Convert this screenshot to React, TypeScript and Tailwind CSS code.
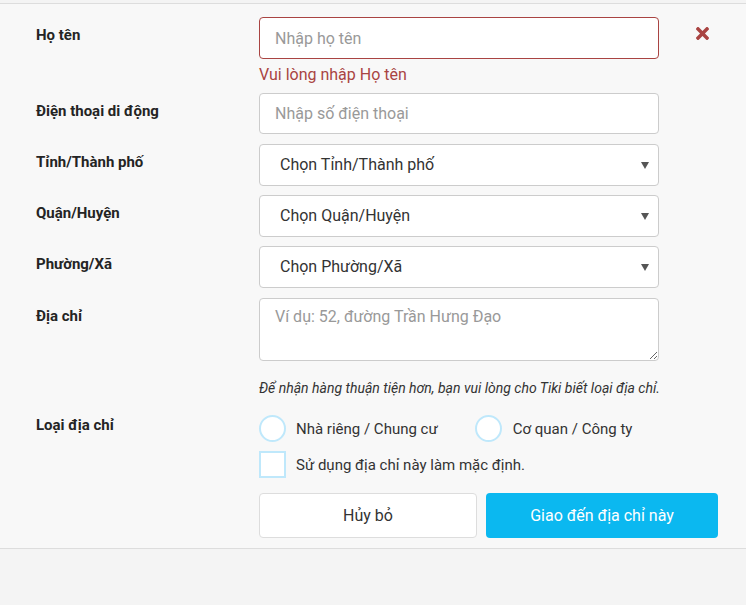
import React from "react";

const font = { fontFamily: "Roboto, 'Noto Sans', sans-serif" };

function Label({ children }: { children: React.ReactNode }) {
  return <div className="w-[223px] shrink-0 pt-[8px] text-[15px] font-bold leading-5 text-[#242424]">{children}</div>;
}

function Select({ value }: { value: string }) {
  return (
    <div className="relative h-[42px] w-[400px] rounded-[4px] border border-[#ccc] bg-white">
      <div className="pl-[20px] text-[16px] leading-[40px] text-[#333]">{value}</div>
      <svg className="absolute right-[9px] top-[17px]" width="8" height="7" viewBox="0 0 8 7">
        <path d="M0 0h8L4 7z" fill="#555" />
      </svg>
    </div>
  );
}

function TimesIcon() {
  return (
    <svg width="13" height="13" viewBox="0 0 352 352" className="mt-[10px]">
      <path
        fill="#a94442"
        d="M242.7 176 342.8 75.9c12.3-12.3 12.3-32.2 0-44.5L320.6 9.2c-12.3-12.3-32.2-12.3-44.5 0L176 109.3 75.9 9.2C63.6-3.1 43.7-3.1 31.4 9.2L9.2 31.4c-12.3 12.3-12.3 32.2 0 44.5L109.3 176 9.2 276.1c-12.3 12.3-12.3 32.2 0 44.5l22.2 22.2c12.3 12.3 32.2 12.3 44.5 0L176 242.7l100.1 100.1c12.3 12.3 32.2 12.3 44.5 0l22.2-22.2c12.3-12.3 12.3-32.2 0-44.5z"
      />
    </svg>
  );
}

export default function App() {
  return (
    <div className="min-h-[605px] bg-[#f4f4f4] pt-[3px]" style={font}>
      <div className="border-y border-[#ddd] bg-[#f8f8f8] pb-[10px] pl-[36px] pt-[13px]">
        <div className="flex">
          <Label>Họ tên</Label>
          <div>
            <input
              className="h-[42px] w-[400px] rounded-[4px] border border-[#a94442] bg-white px-[15px] text-[16px] text-[#333] outline-none placeholder:text-[#999]"
              placeholder="Nhập họ tên"
            />
            <p className="mb-[8px] mt-[6px] text-[16px] leading-5 text-[#a94442]">Vui lòng nhập Họ tên</p>
          </div>
          <div className="pl-[37px]">
            <TimesIcon />
          </div>
        </div>

        <div className="mb-[10px] flex">
          <Label>Điện thoại di động</Label>
          <input
            className="h-[41px] w-[400px] rounded-[4px] border border-[#ccc] bg-white px-[15px] text-[16px] text-[#333] outline-none placeholder:text-[#999]"
            placeholder="Nhập số điện thoại"
          />
        </div>

        <div className="mb-[9px] flex">
          <Label>Tỉnh/Thành phố</Label>
          <Select value="Chọn Tỉnh/Thành phố" />
        </div>
        <div className="mb-[9px] flex">
          <Label>Quận/Huyện</Label>
          <Select value="Chọn Quận/Huyện" />
        </div>
        <div className="mb-[10px] flex">
          <Label>Phường/Xã</Label>
          <Select value="Chọn Phường/Xã" />
        </div>

        <div className="flex">
          <Label>Địa chỉ</Label>
          <div>
            <textarea
              className="block h-[63px] w-[400px] rounded-[4px] border border-[#ccc] bg-white px-[15px] py-[8px] text-[16px] leading-5 text-[#333] outline-none placeholder:text-[#999]"
              placeholder="Ví dụ: 52, đường Trần Hưng Đạo"
            />
            <p className="mt-[17px] text-[14px] italic leading-5 text-[#333]">
              Để nhận hàng thuận tiện hơn, bạn vui lòng cho Tiki biết loại địa chỉ.
            </p>
          </div>
        </div>

        <div className="mt-[17px] flex">
          <Label>
            <span className="relative top-[-8px]">Loại địa chỉ</span>
          </Label>
          <div>
            <div className="flex items-center">
              <span className="h-[27px] w-[27px] rounded-full border-2 border-[#bfe8fb] bg-white" />
              <span className="ml-[10px] text-[15px] leading-5 text-[#333]">Nhà riêng / Chung cư</span>
              <span className="ml-[37px] h-[27px] w-[27px] rounded-full border-2 border-[#bfe8fb] bg-white" />
              <span className="ml-[11px] text-[15px] leading-5 text-[#333]">Cơ quan / Công ty</span>
            </div>
            <div className="mt-[9px] flex items-center">
              <span className="h-[27px] w-[27px] border-2 border-[#bfe8fb] bg-white" />
              <span className="ml-[10px] text-[15px] leading-5 text-[#333]">Sử dụng địa chỉ này làm mặc định.</span>
            </div>
            <div className="mt-[15px] flex gap-[9px]">
              <button className="h-[45px] w-[218px] rounded-[4px] border border-[#ddd] bg-white text-[16px] text-[#333]">
                Hủy bỏ
              </button>
              <button className="h-[45px] w-[232px] rounded-[4px] bg-[#0bb8f0] text-[16px] text-white">
                Giao đến địa chỉ này
              </button>
            </div>
          </div>
        </div>
      </div>
    </div>
  );
}
